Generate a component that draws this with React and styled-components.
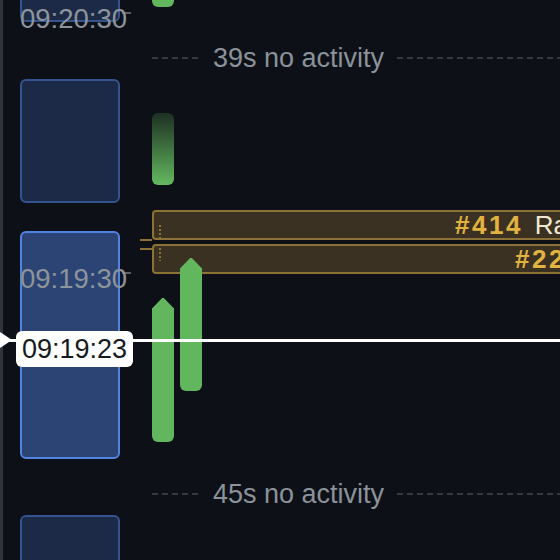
import React from "react";
import styled, { createGlobalStyle, css } from "styled-components";

const GlobalStyle = createGlobalStyle`
  html, body {
    margin: 0;
    padding: 0;
    background: #0d1117;
  }
  body {
    font-family: "Liberation Sans", Arial, sans-serif;
  }
`;

const Canvas = styled.div`
  position: relative;
  width: 560px;
  height: 560px;
  overflow: hidden;
  background: #0d1117;
  display: grid;
  grid-template-columns: 3px 100px 1fr;
  column-gap: 17px;
  box-sizing: border-box;
`;

const EdgeRule = styled.div`
  background: #30353c;
`;

const Lane = styled.div`
  position: relative;
  margin-left: ${(p) => p.$shift || 0}px;
`;

const SessionBlock = styled.div`
  position: absolute;
  left: 0;
  right: 0;
  top: ${(p) => p.$top}px;
  height: ${(p) => p.$height}px;
  box-sizing: border-box;
  border-radius: 6px;
  border: 2px solid #33548f;
  background: #1c2a47;
  ${(p) =>
    p.$active &&
    css`
      border-color: #5183e3;
      background: #2b4473;
    `}
`;

const TimeTick = styled.div`
  position: absolute;
  left: 0;
  top: ${(p) => p.$top}px;
  height: 28px;
  display: flex;
  align-items: center;
  &::before {
    content: "";
    position: absolute;
    left: 102px;
    top: 7px;
    width: 9px;
    height: 2px;
    background: #5b6068;
  }
`;

const TimeText = styled.span`
  position: relative;
  font-size: 27.5px;
  line-height: 28px;
  color: #8d949c;
`;

const GapMarker = styled.div`
  position: absolute;
  left: 0;
  right: 0;
  top: ${(p) => p.$top}px;
  display: flex;
  align-items: center;
  gap: 13px;
  height: 30px;
`;

const Dashes = styled.span`
  flex: ${(p) => (p.$grow ? 1 : "0 0 48px")};
  height: 2px;
  background: repeating-linear-gradient(
    90deg,
    #343a42 0 6px,
    transparent 6px 10px
  );
`;

const GapText = styled.span`
  font-size: 27px;
  line-height: 30px;
  color: #8b929a;
  white-space: nowrap;
`;

const ActivityBar = styled.div`
  position: absolute;
  left: ${(p) => p.$col * 28}px;
  top: ${(p) => p.$top}px;
  width: 22px;
  height: ${(p) => p.$height}px;
  z-index: 2;
  background: ${(p) =>
    p.$fade ? "linear-gradient(180deg, #1d2f22 0%, #64b960 100%)" : "#62b65e"};
  border-radius: ${(p) => (p.$arrow ? "0 0 6px 6px" : "6px")};
  ${(p) =>
    p.$arrow &&
    css`
      &::before {
        content: "";
        position: absolute;
        left: 0;
        top: -10px;
        width: 22px;
        height: 11px;
        background: #62b65e;
        clip-path: polygon(0 100%, 0 95%, 46% 0, 54% 0, 100% 95%, 100% 100%);
      }
    `}
`;

const PrStack = styled.div`
  position: absolute;
  left: 0;
  top: 210px;
  width: 520px;
  display: flex;
  flex-direction: column;
  gap: 4px;
  z-index: 1;
`;

const PrRow = styled.div`
  position: relative;
  height: 30px;
  box-sizing: border-box;
  border: 2px solid #8c7234;
  border-radius: 4px;
  background: #3a3122;
  display: flex;
  align-items: center;
  padding-left: ${(p) => p.$indent}px;
  gap: 12px;
  white-space: nowrap;
  &::before {
    content: "";
    position: absolute;
    left: 5px;
    top: ${(p) => p.$dotTop}px;
    width: 2px;
    height: 13px;
    background: repeating-linear-gradient(
      180deg,
      #8c7234 0 2px,
      transparent 2px 4px
    );
  }
  &::after {
    content: "";
    position: absolute;
    left: -14px;
    top: ${(p) => p.$linkTop}px;
    width: 12px;
    height: 2px;
    background: #8c7234;
  }
`;

const PrNumber = styled.span`
  font-size: 26px;
  font-weight: 700;
  letter-spacing: 2.5px;
  color: #e3b341;
`;

const PrTitle = styled.span`
  font-size: 26px;
  color: #f0e7d2;
`;

const Cursor = styled.div`
  position: absolute;
  left: 0;
  right: 0;
  top: 339px;
  height: 3px;
  background: #ffffff;
  z-index: 3;
  &::before {
    content: "";
    position: absolute;
    left: 0;
    top: -7px;
    border-top: 8px solid transparent;
    border-bottom: 8px solid transparent;
    border-left: 12px solid #ffffff;
  }
`;

const CursorLabel = styled.div`
  position: absolute;
  left: 16px;
  top: -8px;
  width: 117px;
  height: 36px;
  box-sizing: border-box;
  border-radius: 6px;
  background: #ffffff;
  color: #161b22;
  font-size: 27px;
  display: flex;
  align-items: center;
  justify-content: center;
`;

const sessions = [
  { top: -60, height: 82 },
  { top: 79, height: 124 },
  { top: 231, height: 228, active: true },
  { top: 515, height: 120 },
];

const ticks = [
  { top: 5, label: "09:20:30" },
  { top: 265, label: "09:19:30" },
];

const gaps = [
  { top: 43, label: "39s no activity" },
  { top: 479, label: "45s no activity" },
];

const bars = [
  { col: 0, top: -40, height: 47 },
  { col: 0, top: 113, height: 72, fade: true },
  { col: 0, top: 308, height: 134, arrow: true },
  { col: 1, top: 268, height: 123, arrow: true },
];

export default function App() {
  return (
    <>
      <GlobalStyle />
      <Canvas>
        <EdgeRule />

        <Lane>
          {sessions.map((s, i) => (
            <SessionBlock key={i} $top={s.top} $height={s.height} $active={s.active} />
          ))}
          {ticks.map((t) => (
            <TimeTick key={t.label} $top={t.top}>
              <TimeText>{t.label}</TimeText>
            </TimeTick>
          ))}
        </Lane>

        <Lane $shift={15}>
          {gaps.map((g) => (
            <GapMarker key={g.label} $top={g.top}>
              <Dashes />
              <GapText>{g.label}</GapText>
              <Dashes $grow />
            </GapMarker>
          ))}

          <PrStack>
            <PrRow $indent={301} $dotTop={13} $linkTop={27}>
              <PrNumber>#414</PrNumber>
              <PrTitle>Rate limit webhook retries</PrTitle>
            </PrRow>
            <PrRow $indent={361} $dotTop={2} $linkTop={2}>
              <PrNumber>#228</PrNumber>
            </PrRow>
          </PrStack>

          {bars.map((b, i) => (
            <ActivityBar
              key={i}
              $col={b.col}
              $top={b.top}
              $height={b.height}
              $fade={b.fade}
              $arrow={b.arrow}
            />
          ))}
        </Lane>

        <Cursor>
          <CursorLabel>09:19:23</CursorLabel>
        </Cursor>
      </Canvas>
    </>
  );
}
